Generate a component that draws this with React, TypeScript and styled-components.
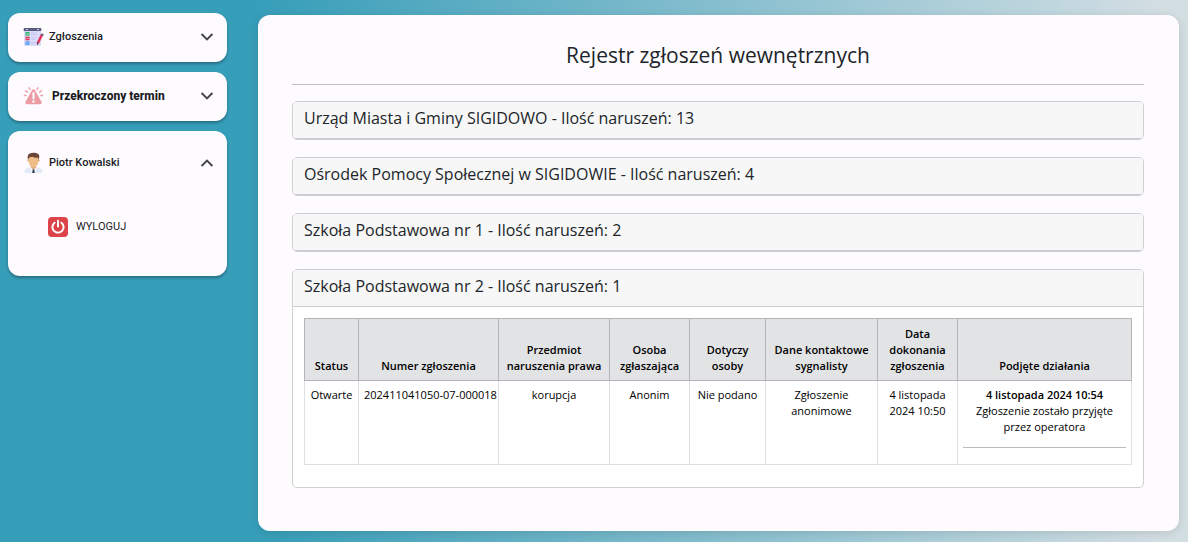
import React, { useState } from "react";
import styled, { createGlobalStyle } from "styled-components";

const GlobalStyle = createGlobalStyle`
  *, *::before, *::after { box-sizing: border-box; }
  body {
    margin: 0;
    min-height: 100vh;
    color: #212529;
    font-family: "Open Sans", "Noto Sans", sans-serif;
    background: linear-gradient(90deg, #379eb9 22%, #d3dee3 98%) fixed;
  }
`;

const Page = styled.div`
  display: flex;
  align-items: flex-start;
  gap: 31px;
  min-height: 100vh;
  padding: 13px 9px 11px 8px;
`;

const Sidebar = styled.nav`
  display: flex;
  flex: 0 0 219px;
  flex-direction: column;
  gap: 10px;
  font-family: Roboto, sans-serif;
`;

const Panel = styled.section`
  padding-bottom: 1px;
  border-radius: 12px;
  background: #fefbff;
  box-shadow: 0 2px 3px rgba(0, 0, 0, 0.3);
`;

const PanelToggle = styled.button<{ $tall?: boolean }>`
  display: flex;
  align-items: center;
  width: 100%;
  height: ${(p) => (p.$tall ? 64 : 48)}px;
  padding: 0 12px 0 15px;
  border: 0;
  background: none;
  color: #1b1b1f;
  font: 500 11px/16px Roboto, sans-serif;
  text-align: left;
  cursor: pointer;
`;

const PanelLabel = styled.span<{ $strong?: boolean }>`
  flex: 1;
  padding-left: ${(p) => (p.$strong ? 7 : 4)}px;
  font-size: ${(p) => (p.$strong ? 12 : 11)}px;
  font-weight: ${(p) => (p.$strong ? 800 : 500)};
`;

const PanelBody = styled.div`
  padding: 20px 40px 36px;
`;

const LogoutLink = styled.a`
  display: flex;
  align-items: center;
  gap: 8px;
  height: 24px;
  color: #1b1b1f;
  font-size: 11px;
  line-height: 16px;
  text-decoration: none;
`;

const Main = styled.main`
  flex: 1;
  min-width: 0;
  margin-top: 2px;
  padding: 25px 35px 43px 34px;
  border-radius: 12px;
  background: #fefbff;
  box-shadow: 0 2px 10px rgba(0, 0, 0, 0.12);
`;

const Title = styled.h1`
  margin: 0;
  padding-bottom: 14px;
  border-bottom: 1px solid #bfbec2;
  font-size: 21px;
  font-weight: 400;
  line-height: 30px;
  text-align: center;
`;

const CardList = styled.div`
  display: flex;
  flex-direction: column;
  gap: 17px;
  margin-top: 16px;
`;

const Card = styled.article`
  border: 1px solid #cfcfd2;
  border-radius: 5px;
  background: #fff;
  overflow: hidden;
`;

const CardHeader = styled.h2`
  margin: 0;
  border-bottom: 1px solid #cccccf;
  background: #f7f7f7;
  font: inherit;
`;

const CardToggle = styled.button`
  display: block;
  width: 100%;
  padding: 4px 12px 8px 11px;
  border: 0;
  background: none;
  color: #212529;
  font: 400 16px/24px "Open Sans", "Noto Sans", sans-serif;
  text-align: left;
  cursor: pointer;
`;

const CardBody = styled.div`
  padding: 11px 11px 22px;
`;

const Table = styled.table`
  width: 100%;
  table-layout: fixed;
  border-collapse: collapse;
  color: #000;
  font-size: 11px;
  line-height: 16px;
  text-align: center;
`;

const HeadCell = styled.th`
  height: 62px;
  padding: 6px 5px;
  border: 1px solid #b4b5b8;
  background: #e2e3e5;
  font-weight: 600;
  vertical-align: bottom;
`;

const Cell = styled.td`
  height: 84px;
  padding: 6px 5px;
  border: 1px solid #dfe0e1;
  vertical-align: top;
`;

const Line = styled.div<{ $strong?: boolean }>`
  font-weight: ${(p) => (p.$strong ? 600 : "inherit")};
  white-space: nowrap;
`;

const Divider = styled.hr`
  height: 1px;
  margin: 12px 0 10px;
  border: 0;
  background: #bcbcbc;
`;

const ChevronSvg = ({ up }: { up?: boolean }) => (
  <svg width="16" height="16" viewBox="0 0 16 16" fill="none" stroke="#46464c" strokeWidth="2" aria-hidden="true">
    <path d={up ? "M2.6 11 8 5.600l5.400 5.400" : "M2.6 5 8 10.400 13.400 5"} />
  </svg>
);

const ReportsIcon = () => (
  <svg width="22" height="20" viewBox="0 0 22 20" aria-hidden="true">
    <rect x="1" y="2" width="17" height="17" rx="1" fill="#dcdcfa" />
    <path d="M1.500 1h16q.8 0 .8.8V4H.7V1.800q0-.8.8-.8Z" fill="#5c5c80" />
    <path d="M3 2.500h2M14 2.500h2" stroke="#c9c9e4" />
    <rect x="2.500" y="5" width="4" height="3.600" fill="#35b36b" />
    <rect x="2.500" y="9.700" width="4" height="3.600" fill="#dc3658" />
    <rect x="2.500" y="14.300" width="4" height="3.600" fill="#4f9cf0" />
    <path d="m3.600 6.700.8.8 1.200-1.400M3.600 11.500h1.800M3.600 16h1.800" stroke="#fff" strokeWidth=".7" fill="none" />
    <path d="M8 6h6M8 7.800h5M8 10.700h6M8 12.500h4M8 15.300h5M8 17h4" stroke="#c3c3ef" strokeWidth=".9" />
    <path d="m17.600 7.600 2.400 1-4 7.800-2.200-.9Z" fill="#e0355b" />
    <path d="m18.300 6.300 2.600 1.100-.8 1.500-2.500-1.100Z" fill="#6c5b80" />
    <path d="m13.800 15.200 2.300 1-2.200 2Z" fill="#6b3850" />
  </svg>
);

const AlarmIcon = () => (
  <svg width="22" height="20" viewBox="0 0 22 20" aria-hidden="true">
    <path d="M10.500 5 17 16.500H4Z" fill="#eb9ba4" stroke="#eb9ba4" strokeWidth="3.400" strokeLinejoin="round" />
    <path d="M10.500 7v5.500" stroke="#fff" strokeWidth="2" strokeLinecap="round" />
    <circle cx="10.500" cy="15.500" r="1.200" fill="#fff" />
    <path d="M6 1.800 7 3.300M15 1.800 14 3.300M2.500 4.800 4.400 6M18.500 4.800 16.600 6M1.300 9.400l1.800.2M19.700 9.400l-1.800.2" stroke="#eea5ad" strokeWidth="1.500" strokeLinecap="round" />
  </svg>
);

const UserIcon = () => (
  <svg width="22" height="22" viewBox="0 0 22 22" aria-hidden="true">
    <path d="M1.500 21v-2q0-2 2-2.500L8 15h5l4.500 1.500q2 .5 2 2.500v2Z" fill="#e3e9f6" />
    <path d="M8 13h5v3l-2.500 2.500L8 16Z" fill="#dfa876" />
    <path d="m7.500 15.500 3 2 3-2-1.500 5.500H9Z" fill="#fff" />
    <path d="M9.700 17.300h1.600l.6 3.700H9.100Z" fill="#42495e" />
    <circle cx="5.200" cy="8.500" r="1" fill="#e3ab77" />
    <circle cx="15.800" cy="8.500" r="1" fill="#e3ab77" />
    <path d="M5.800 5q0-2.500 4.700-2.500T15.200 5v5.500q-.4 2.700-2.500 4.500-2.200 1.500-4.400 0-2.100-1.800-2.500-4.500Z" fill="#efbd89" />
    <path d="M5 8Q3.800 3 6.400 1.800 8.500.5 11.700.8q4.800.3 4.600 4.200L15.700 8 14.800 5.500Q12 6 9.300 4.800L6.300 5.500Z" fill="#6e4638" />
  </svg>
);

const PowerIcon = () => (
  <svg width="20" height="20" viewBox="0 0 20 20" fill="none" aria-hidden="true">
    <rect width="20" height="20" rx="4" fill="#dd4449" />
    <path d="M6.600 5.700A5.600 5.600 0 1 0 13.400 5.700" stroke="#fff" strokeWidth="2" strokeLinecap="round" />
    <path d="M10 3.800v5.700" stroke="#fff" strokeWidth="2" strokeLinecap="round" />
  </svg>
);

const units = [
  { name: "Urząd Miasta i Gminy SIGIDOWO", count: 13 },
  { name: "Ośrodek Pomocy Społecznej w SIGIDOWIE", count: 4 },
  { name: "Szkoła Podstawowa nr 1", count: 2 },
  { name: "Szkoła Podstawowa nr 2", count: 1 },
];

const columns: { lines: string[]; share: number }[] = [
  { lines: ["Status"], share: 54 },
  { lines: ["Numer zgłoszenia"], share: 140 },
  { lines: ["Przedmiot", "naruszenia prawa"], share: 111 },
  { lines: ["Osoba", "zgłaszająca"], share: 80 },
  { lines: ["Dotyczy", "osoby"], share: 76 },
  { lines: ["Dane kontaktowe", "sygnalisty"], share: 112 },
  { lines: ["Data", "dokonania", "zgłoszenia"], share: 80 },
  { lines: ["Podjęte działania"], share: 174 },
];
const totalShare = columns.reduce((sum, c) => sum + c.share, 0);

const report: string[][] = [
  ["Otwarte"],
  ["202411041050-07-000018"],
  ["korupcja"],
  ["Anonim"],
  ["Nie podano"],
  ["Zgłoszenie", "anonimowe"],
  ["4 listopada", "2024 10:50"],
];

const ReportTable = () => (
  <Table>
    <colgroup>
      {columns.map((c) => (
        <col key={c.lines[0]} style={{ width: `${(c.share / totalShare) * 100}%` }} />
      ))}
    </colgroup>
    <thead>
      <tr>
        {columns.map((c) => (
          <HeadCell key={c.lines[0]} scope="col">
            {c.lines.map((l) => <Line key={l}>{l}</Line>)}
          </HeadCell>
        ))}
      </tr>
    </thead>
    <tbody>
      <tr>
        {report.map((lines) => (
          <Cell key={lines[0]}>
            {lines.map((l) => <Line key={l}>{l}</Line>)}
          </Cell>
        ))}
        <Cell>
          <Line $strong>4 listopada 2024 10:54</Line>
          <Line>Zgłoszenie zostało przyjęte</Line>
          <Line>przez operatora</Line>
          <Divider />
        </Cell>
      </tr>
    </tbody>
  </Table>
);

export default function App() {
  const [openUnit, setOpenUnit] = useState(3);
  const [userOpen, setUserOpen] = useState(true);

  return (
    <>
      <GlobalStyle />
      <Page>
        <Sidebar>
          <Panel>
            <PanelToggle type="button" aria-expanded={false}>
              <ReportsIcon />
              <PanelLabel>Zgłoszenia</PanelLabel>
              <ChevronSvg />
            </PanelToggle>
          </Panel>
          <Panel>
            <PanelToggle type="button" aria-expanded={false}>
              <AlarmIcon />
              <PanelLabel $strong>Przekroczony termin</PanelLabel>
              <ChevronSvg />
            </PanelToggle>
          </Panel>
          <Panel>
            <PanelToggle type="button" $tall={userOpen} aria-expanded={userOpen} onClick={() => setUserOpen(!userOpen)}>
              <UserIcon />
              <PanelLabel>Piotr Kowalski</PanelLabel>
              <ChevronSvg up={userOpen} />
            </PanelToggle>
            {userOpen && (
              <PanelBody>
                <LogoutLink href="#logout">
                  <PowerIcon />
                  WYLOGUJ
                </LogoutLink>
              </PanelBody>
            )}
          </Panel>
        </Sidebar>
        <Main>
          <Title>Rejestr zgłoszeń wewnętrznych</Title>
          <CardList>
            {units.map((u, i) => (
              <Card key={u.name}>
                <CardHeader>
                  <CardToggle type="button" aria-expanded={openUnit === i} onClick={() => setOpenUnit(i)}>
                    {`${u.name} - Ilość naruszeń: ${u.count}`}
                  </CardToggle>
                </CardHeader>
                {openUnit === i && (
                  <CardBody>
                    <ReportTable />
                  </CardBody>
                )}
              </Card>
            ))}
          </CardList>
        </Main>
      </Page>
    </>
  );
}
